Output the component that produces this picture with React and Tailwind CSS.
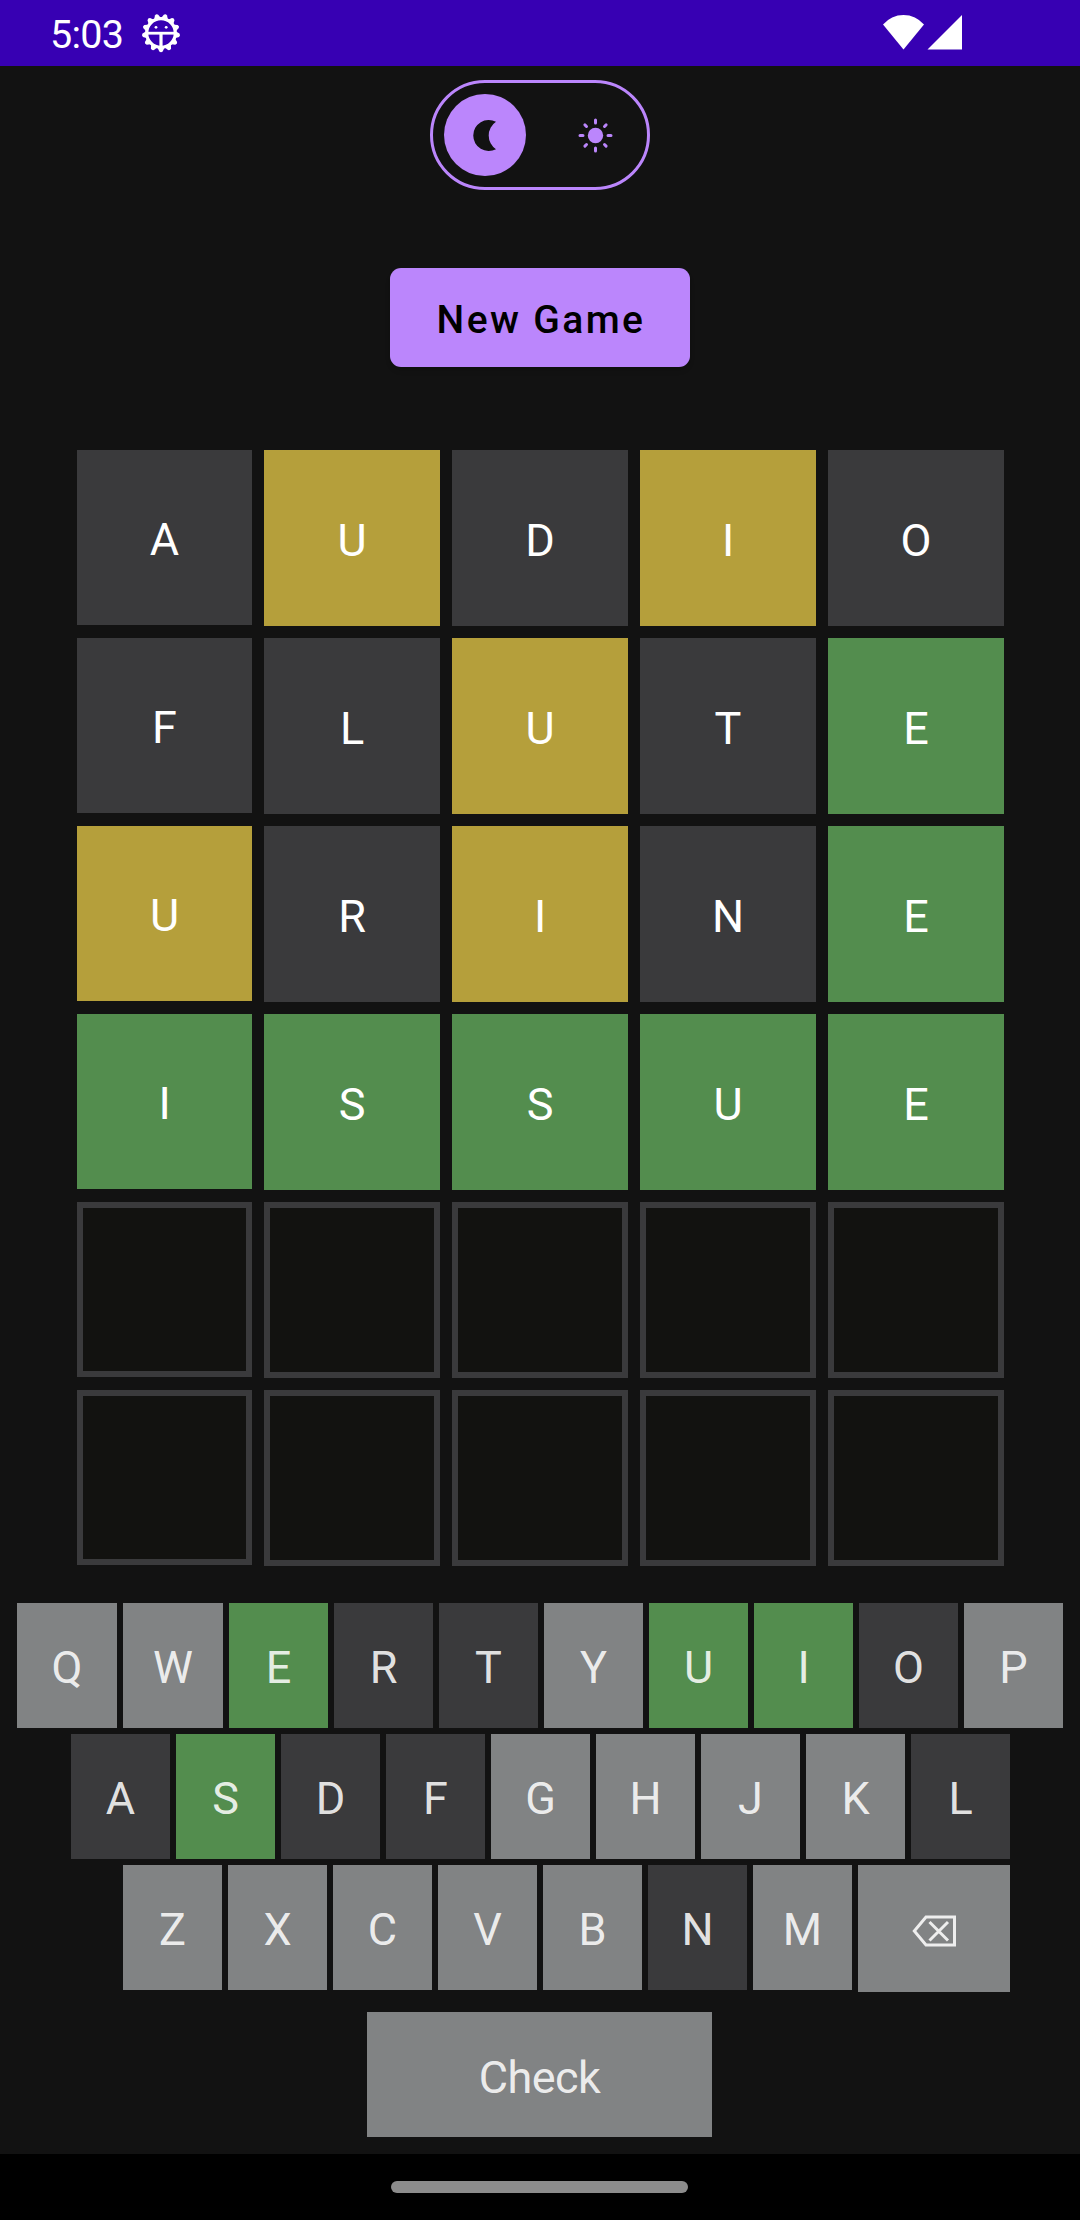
const TONES = {
  absent: "bg-[#3a3a3c]",
  present: "bg-[#b59f3b]",
  correct: "bg-[#538d4e]",
  unused: "bg-[#818384]",
  empty: "bg-[#121210] border-6 border-[#3a3a3c]",
};

const CODES = { a: "absent", p: "present", c: "correct", u: "unused", e: "empty" };

const BOARD = [
  ["AUDIO", "apapa"],
  ["FLUTE", "aapac"],
  ["URINE", "papac"],
  ["ISSUE", "ccccc"],
  ["     ", "eeeee"],
  ["     ", "eeeee"],
];

const KEY_ROWS = [
  ["QWERTYUIOP", "uucaauccau"],
  ["ASDFGHJKL", "acaauuuua"],
  ["ZXCVBNM", "uuuuuau"],
];

const TEETH = Array.from({ length: 13 }, (_, i) => 180 + (i * 360) / 13);

function GearIcon() {
  return (
    <svg className="ml-[18px] mt-[13px] size-10" viewBox="-20 -20 40 40" fill="#fff">
      {TEETH.map((angle) => (
        <path
          key={angle}
          transform={`rotate(${angle})`}
          d="M-4 -13.5L-1.7 -18.4Q0 -20 1.7 -18.4L4 -13.5Z"
        />
      ))}
      <circle r="14.3" fill="none" stroke="#fff" strokeWidth="3.2" />
      <rect x="-13" y="-1.2" width="26" height="2.8" />
      <rect x="-1.6" y="0" width="3.2" height="14" />
      <circle cx="-5" cy="-5.7" r="1.4" />
      <circle cx="5.2" cy="-5.7" r="1.4" />
    </svg>
  );
}

function StatusBar() {
  return (
    <header className="flex h-[66px] items-start bg-[#3700b3] pl-[50px] text-white">
      <span className="mt-[11px] text-[39.5px] leading-[47px] tracking-[-0.75px]">5:03</span>
      <GearIcon />
      <svg className="ml-auto mr-[118px] mt-[15px] h-[35px] w-[79px]" viewBox="883 15 79 35" fill="#fff">
        <path d="M883 24.5A26.9 26.9 0 0 1 924 24.5L903.5 49.5Z" />
        <path d="M927.5 49.5L962 15V49.5Z" />
      </svg>
    </header>
  );
}

function ThemeToggle() {
  return (
    <div className="mt-3.5 flex h-[110px] w-[220px] items-center justify-between rounded-full border-3 border-[#bb86fc] pl-[11px] pr-[34px]">
      <div className="flex size-[82px] items-center justify-center rounded-full bg-[#bb86fc]">
        <svg className="size-[34px]" viewBox="468 118 34 34">
          <path d="M496 121.8A15.5 15.5 0 1 0 496 149.2A16.5 16.5 0 0 1 496 121.8Z" fill="#121212" />
        </svg>
      </div>
      <svg className="size-[35px]" viewBox="-17.5 -17.5 35 35" stroke="#bb86fc" strokeWidth="3" strokeLinecap="round">
        <circle r="7.7" fill="#bb86fc" stroke="none" />
        <path d="M0 -15.5V-12.5M0 12.5V15.5M-15.5 0H-12.5M12.5 0H15.5M-10.6 -10.6L-9 -9M10.6 -10.6L9 -9M-10.6 10.6L-9 9M10.6 10.6L9 9" />
      </svg>
    </div>
  );
}

function Cell({ letter, tone, first }) {
  return (
    <div
      className={`flex items-center justify-center text-[45px] leading-[53px] text-white ${
        first ? "size-[175px]" : "size-44"
      } ${TONES[tone]}`}
    >
      <span className={first ? "pt-1" : "pt-[5px]"}>{letter.trim()}</span>
    </div>
  );
}

function Key({ letter, tone, wide }) {
  return (
    <button
      className={`flex h-[125px] items-center justify-center text-[45px] leading-[53px] text-white/87 ${
        wide ? "w-[100px]" : "w-[99px]"
      } ${TONES[tone]}`}
    >
      <span className="pt-1">{letter}</span>
    </button>
  );
}

function Keyboard() {
  return (
    <div className="mt-[37px] flex flex-col gap-1.5">
      {KEY_ROWS.map(([letters, tones], row) => (
        <div
          key={letters}
          className={`flex gap-1.5 ${row === 0 ? "pl-[17px]" : row === 1 ? "pl-[71px]" : "h-[127px] pl-[123px]"}`}
        >
          {[...letters].map((letter, i) => (
            <Key key={letter} letter={letter} tone={CODES[tones[i]]} wide={row === 0 && i < 2} />
          ))}
          {row === 2 && (
            <button className="flex h-[127px] w-[152px] items-center justify-center bg-[#818384] pt-1" aria-label="Backspace">
              <svg className="h-8 w-11" viewBox="912 1914.5 44 32" fill="none" stroke="#eee" strokeWidth="3">
                <path d="M926 1916.5H954.5V1944.5H926L914.3 1930.5Z" />
                <path d="M929.5 1921.5L948 1940M948 1921.5L929.5 1940" />
              </svg>
            </button>
          )}
        </div>
      ))}
    </div>
  );
}

export default function App() {
  return (
    <div className="flex h-[2220px] w-[1080px] flex-col overflow-hidden bg-[#121212] font-['Roboto',sans-serif]">
      <StatusBar />
      <main className="flex grow flex-col">
        <div className="flex flex-col items-center">
          <ThemeToggle />
          <button className="mt-[78px] h-[99px] w-[300px] rounded-[11px] bg-[#bb86fc] pl-0.5 pt-[5px] text-[39px] font-medium tracking-[2.4px] text-black shadow-md">
            New Game
          </button>
        </div>
        <div className="mt-[83px] flex flex-col gap-3 pl-[77px]">
          {BOARD.map(([word, tones], row) => (
            <div key={row} className="flex h-44 gap-3">
              {[...word].map((letter, i) => (
                <Cell key={i} letter={letter} tone={CODES[tones[i]]} first={i === 0} />
              ))}
            </div>
          ))}
        </div>
        <Keyboard />
        <button className="ml-[367px] mt-5 h-[125px] w-[345px] bg-[#818384] pt-[5px] text-[45px] leading-[53px] tracking-[-0.6px] text-white/87">
          Check
        </button>
      </main>
      <footer className="flex h-[66px] bg-black pl-[391px] pt-[27px]">
        <div className="h-3 w-[297px] rounded-full bg-[#8c8c8c]" />
      </footer>
    </div>
  );
}
